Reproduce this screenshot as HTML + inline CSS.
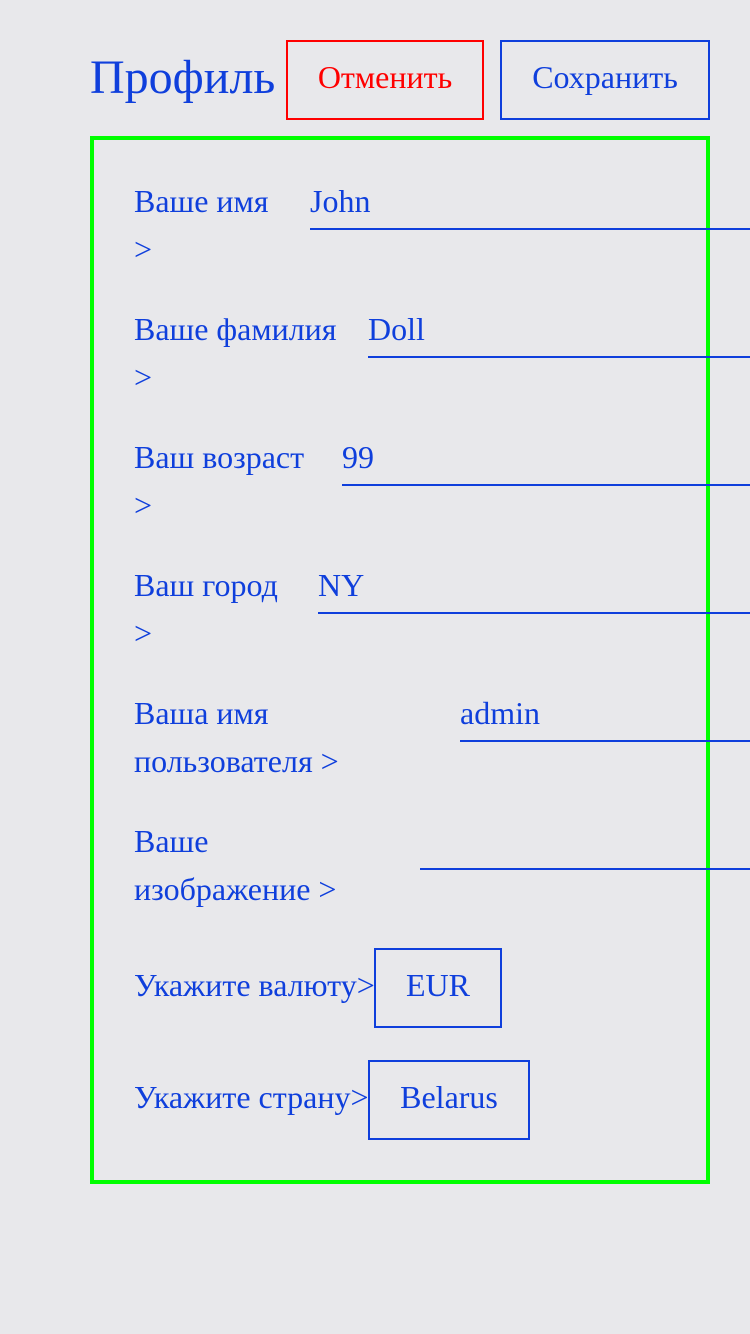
<!DOCTYPE html><html><head><meta charset="utf-8"><style>
body{margin:0;width:750px;height:1334px;background:#e8e8eb;font-family:"Liberation Serif",serif;color:#0f3fdc;position:relative;overflow:hidden}
.a{position:absolute;white-space:nowrap;font-size:32px;line-height:48px}
.u{position:absolute;height:2px;background:#0f3fdc;right:0}
.b{position:absolute;box-sizing:border-box;border:2px solid #0f3fdc;display:flex;align-items:center;justify-content:center;font-size:32px;padding-bottom:6px}
</style></head><body>
<div class="a" style="left:90px;top:50px;font-size:48px;line-height:56px">Профиль</div>
<div class="b" style="left:286px;top:40px;width:198px;height:80px;border-color:#f00;color:#f00">Отменить</div>
<div class="b" style="left:500px;top:40px;width:210px;height:80px">Сохранить</div>
<div style="position:absolute;left:90px;top:136px;width:620px;height:1048px;box-sizing:border-box;border:4px solid #00ff00"></div>

<div class="a" style="left:134px;top:177px">Ваше имя<br>&gt;</div>
<div class="a" style="left:310px;top:177px">John</div><div class="u" style="left:310px;top:228px"></div>

<div class="a" style="left:134px;top:305px">Ваше фамилия<br>&gt;</div>
<div class="a" style="left:368px;top:305px">Doll</div><div class="u" style="left:368px;top:356px"></div>

<div class="a" style="left:134px;top:433px">Ваш возраст<br>&gt;</div>
<div class="a" style="left:342px;top:433px">99</div><div class="u" style="left:342px;top:484px"></div>

<div class="a" style="left:134px;top:561px">Ваш город<br>&gt;</div>
<div class="a" style="left:318px;top:561px">NY</div><div class="u" style="left:318px;top:612px"></div>

<div class="a" style="left:134px;top:689px">Ваша имя<br>пользователя &gt;</div>
<div class="a" style="left:460px;top:689px">admin</div><div class="u" style="left:460px;top:740px"></div>

<div class="a" style="left:134px;top:817px">Ваше<br>изображение &gt;</div>
<div class="u" style="left:420px;top:868px"></div>

<div class="a" style="left:134px;top:961px">Укажите валюту&gt;</div>
<div class="b" style="left:374px;top:948px;width:128px;height:80px">EUR</div>
<div class="a" style="left:134px;top:1073px">Укажите страну&gt;</div>
<div class="b" style="left:368px;top:1060px;width:162px;height:80px">Belarus</div>
</body></html>
